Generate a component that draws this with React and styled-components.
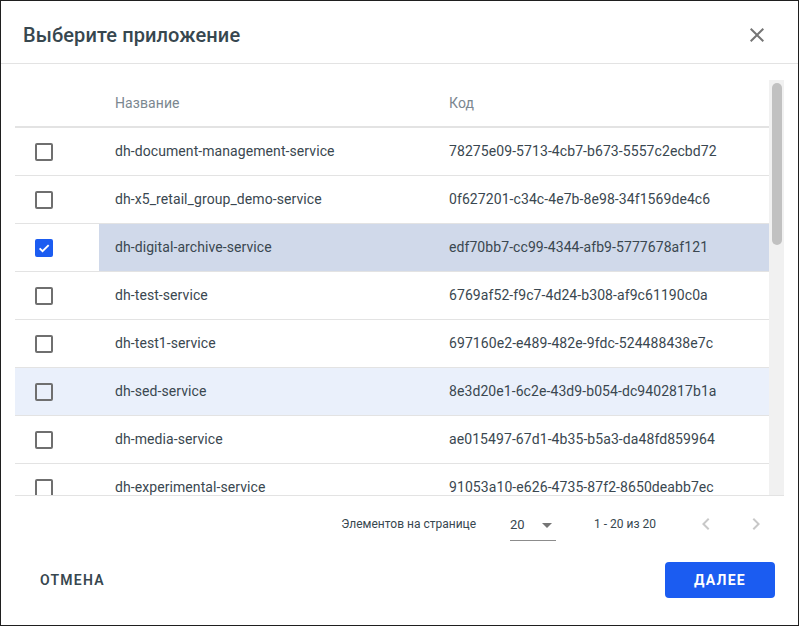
import React from 'react'
import styled, { createGlobalStyle } from 'styled-components'

const GlobalStyle = createGlobalStyle`
  html, body {
    margin: 0;
    padding: 0;
    background: #fff;
  }
  * {
    box-sizing: border-box;
  }
`

const Dialog = styled.div`
  width: 799px;
  height: 626px;
  border: 1px solid #1f1f1f;
  background: #fff;
  font-family: Roboto, "Noto Sans", sans-serif;
  color: #3a4750;
  display: flex;
  flex-direction: column;
`

const Header = styled.div`
  height: 63px;
  flex-shrink: 0;
  display: flex;
  align-items: center;
  justify-content: space-between;
  padding: 6px 21px 0 22px;
  border-bottom: 1px solid #e3e3e3;
`

const Title = styled.h2`
  margin: 0;
  font-size: 20px;
  font-weight: 500;
  color: #37474f;
  letter-spacing: 0.1px;
`

const IconButton = styled.button`
  width: 40px;
  height: 40px;
  padding: 0;
  border: none;
  background: transparent;
  display: flex;
  align-items: center;
  justify-content: center;
  cursor: ${p => (p.disabled ? 'default' : 'pointer')};
  color: ${p => (p.disabled ? '#c8c8c8' : '#757575')};
`

const Body = styled.div`
  padding: 16px 14px 0 14px;
  flex-shrink: 0;
`

const ScrollArea = styled.div`
  height: 416px;
  display: flex;
  border-bottom: 1px solid #e3e3e3;
`

const Viewport = styled.div`
  flex: 1;
  overflow: hidden;
`

const ScrollTrack = styled.div`
  width: 15px;
  flex-shrink: 0;
  background: #f1f1f1;
  padding: 3px 2px 0 3px;
`

const ScrollThumb = styled.div`
  height: 162px;
  border-radius: 5px;
  background: #c1c1c1;
`

const Row = styled.div`
  display: grid;
  grid-template-columns: 84px 334px 1fr;
  height: 48px;
  align-items: stretch;
  border-bottom: 1px solid #e3e3e3;
  background: ${p => (p.hovered ? '#eaf0fb' : 'transparent')};
`

const HeadRow = styled(Row)`
  border-bottom: 2px solid #e3e3e3;
`

const Cell = styled.div`
  display: flex;
  align-items: center;
  padding: 0 0 1px 16px;
  font-size: 14px;
  letter-spacing: 0.08px;
  color: #3a4750;
  white-space: nowrap;
  background: ${p => (p.selected ? '#d0d9ea' : 'transparent')};
`

const HeadCell = styled(Cell)`
  color: #7b8790;
`

const CheckCell = styled.div`
  display: flex;
  align-items: center;
  padding-left: 20px;
`

const Box = styled.span`
  width: 18px;
  height: 18px;
  border-radius: 2px;
  border: 2px solid ${p => (p.checked ? '#1b5cf1' : '#6f6f6f')};
  background: ${p => (p.checked ? '#1b5cf1' : 'transparent')};
  display: flex;
  align-items: center;
  justify-content: center;
`

const Paginator = styled.div`
  height: 56px;
  flex-shrink: 0;
  display: flex;
  align-items: center;
  justify-content: flex-end;
  padding-right: 22px;
  font-size: 12px;
  color: #37474f;
`

const PageLabel = styled.span`
  margin-right: 34px;
`

const PageSelect = styled.div`
  width: 46px;
  height: 28px;
  display: flex;
  align-items: center;
  justify-content: space-between;
  border-bottom: 1px solid #8c8c8c;
  margin-top: 6px;
  padding-bottom: 4px;
  margin-right: 38px;
  font-size: 13px;
  color: #37474f;
`

const RangeLabel = styled.span`
  margin-right: 30px;
`

const NavGroup = styled.div`
  display: flex;
  gap: 10px;
`

const Footer = styled.div`
  display: flex;
  justify-content: space-between;
  align-items: center;
  padding: 10px 23px 0 23px;
`

const TextButton = styled.button`
  height: 36px;
  padding: 0 16px;
  border: none;
  border-radius: 4px;
  font-family: Roboto, "Noto Sans", sans-serif;
  font-size: 14px;
  font-weight: ${p => (p.primary ? 700 : 600)};
  letter-spacing: 1.25px;
  cursor: pointer;
  min-width: ${p => (p.primary ? '110px' : '64px')};
  background: ${p => (p.primary ? '#1b5cf1' : 'transparent')};
  color: ${p => (p.primary ? '#fff' : '#37474f')};
`

// only the rows that fit in the visible part of the list
const apps = [
  ['dh-document-management-service', '78275e09-5713-4cb7-b673-5557c2ecbd72'],
  ['dh-x5_retail_group_demo-service', '0f627201-c34c-4e7b-8e98-34f1569de4c6'],
  ['dh-digital-archive-service', 'edf70bb7-cc99-4344-afb9-5777678af121'],
  ['dh-test-service', '6769af52-f9c7-4d24-b308-af9c61190c0a'],
  ['dh-test1-service', '697160e2-e489-482e-9fdc-524488438e7c'],
  ['dh-sed-service', '8e3d20e1-6c2e-43d9-b054-dc9402817b1a'],
  ['dh-media-service', 'ae015497-67d1-4b35-b5a3-da48fd859964'],
  ['dh-experimental-service', '91053a10-e626-4735-87f2-8650deabb7ec'],
]

const CloseIcon = () => (
  <svg width="24" height="24" viewBox="0 0 24 24">
    <path
      fill="currentColor"
      d="M19 6.41 17.59 5 12 10.59 6.41 5 5 6.41 10.59 12 5 17.59 6.41 19 12 13.41 17.59 19 19 17.59 13.41 12z"
    />
  </svg>
)

const Chevron = ({ left }) => (
  <svg width="24" height="24" viewBox="0 0 24 24">
    <path
      fill="currentColor"
      d={left ? 'M15.41 7.41 14 6l-6 6 6 6 1.41-1.41L10.83 12z' : 'M10 6 8.59 7.41 13.17 12l-4.58 4.59L10 18l6-6z'}
    />
  </svg>
)

const Check = () => (
  <svg width="14" height="14" viewBox="0 0 24 24">
    <path fill="none" stroke="#fff" strokeWidth="3.2" d="M4.5 12.5l5 5L20 7" />
  </svg>
)

const App = () => {
  const selectedIndex = 2
  const hoveredIndex = 5

  return (
    <Dialog>
      <GlobalStyle />
      <Header>
        <Title>Выберите приложение</Title>
        <IconButton aria-label="close">
          <CloseIcon />
        </IconButton>
      </Header>
      <Body>
        <ScrollArea>
          <Viewport>
            <HeadRow>
              <CheckCell />
              <HeadCell>Название</HeadCell>
              <HeadCell>Код</HeadCell>
            </HeadRow>
            {apps.map(([name, code], i) => {
              const selected = i === selectedIndex
              return (
                <Row key={code} hovered={i === hoveredIndex}>
                  <CheckCell>
                    <Box checked={selected}>{selected && <Check />}</Box>
                  </CheckCell>
                  <Cell selected={selected}>{name}</Cell>
                  <Cell selected={selected}>{code}</Cell>
                </Row>
              )
            })}
          </Viewport>
          <ScrollTrack>
            <ScrollThumb />
          </ScrollTrack>
        </ScrollArea>
      </Body>
      <Paginator>
        <PageLabel>Элементов на странице</PageLabel>
        <PageSelect>
          <span>20</span>
          <svg width="24" height="24" viewBox="0 0 24 24" style={{ marginRight: -3 }}>
            <path fill="#757575" d="M7 10l5 5 5-5z" />
          </svg>
        </PageSelect>
        <RangeLabel>1 - 20 из 20</RangeLabel>
        <NavGroup>
          <IconButton disabled>
            <Chevron left />
          </IconButton>
          <IconButton disabled>
            <Chevron />
          </IconButton>
        </NavGroup>
      </Paginator>
      <Footer>
        <TextButton>ОТМЕНА</TextButton>
        <TextButton primary>ДАЛЕЕ</TextButton>
      </Footer>
    </Dialog>
  )
}

export default App
